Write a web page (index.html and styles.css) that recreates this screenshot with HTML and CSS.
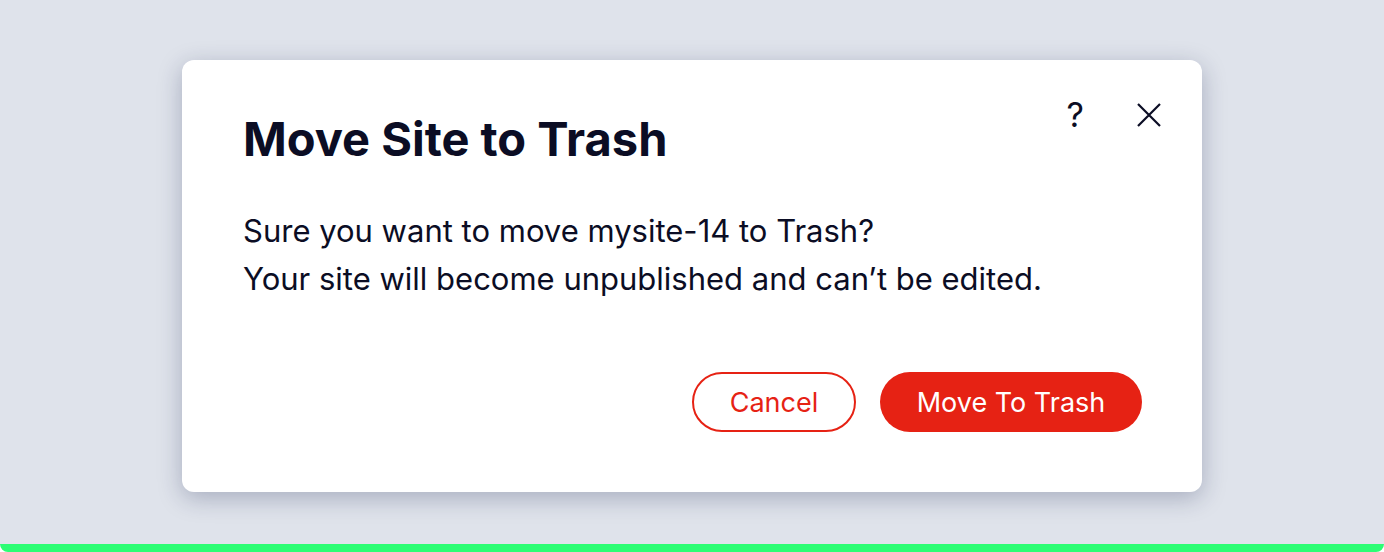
FILE: index.html
```html
<!DOCTYPE html>
<html>
<head>
<meta charset="utf-8">
<link rel="stylesheet" href="styles.css">
</head>
<body>
<div class="stage">
  <div class="dialog">
    <div class="header">
      <h1 class="title">Move Site to Trash</h1>
      <div class="actions">
        <span class="help">?</span>
        <svg class="close" width="26" height="26" viewBox="0 0 26 26"><path d="M2 2 L24 24 M24 2 L2 24" stroke="#0b0d24" stroke-width="2.2" fill="none"/></svg>
      </div>
    </div>
    <div class="body">
      <p>Sure you want to move mysite-14 to Trash?</p>
      <p>Your site will become unpublished and can’t be edited.</p>
    </div>
    <div class="footer">
      <button class="btn btn-secondary">Cancel</button>
      <button class="btn btn-primary">Move To Trash</button>
    </div>
  </div>
</div>
</body>
</html>
```

FILE: styles.css
```css
html, body { margin: 0; padding: 0; background: #ffffff; }
body { font-family: "Inter", "Noto Sans", sans-serif; color: #0b0d24; }
.stage {
  width: 1384px;
  height: 552px;
  box-sizing: border-box;
  background: #dfe3eb;
  border-bottom: 8px solid #2cfd74;
  border-radius: 0 0 8px 8px;
  display: flex;
  justify-content: center;
  padding-top: 60px;
}
.dialog {
  width: 1020px;
  height: 432px;
  box-sizing: border-box;
  background: #fff;
  border-radius: 12px;
  box-shadow: 0 6px 24px rgba(22, 33, 74, 0.28);
  padding: 40px 60px 60px 61px;
  display: flex;
  flex-direction: column;
}
.header { display: flex; justify-content: space-between; align-items: flex-start; }
.title { margin: 9px 0 0; font-size: 47px; font-weight: 700; letter-spacing: 0; line-height: 60px; }
.actions { display: flex; align-items: center; gap: 52px; margin-top: 2px; margin-right: -20px; }
.help { font-size: 34px; line-height: 26px; font-weight: 400; }
.body { margin-top: 38px; font-size: 31px; line-height: 48px; }
.body p { margin: 0; }
.footer { margin-top: auto; display: flex; justify-content: flex-end; gap: 24px; }
.btn {
  height: 60px;
  border-radius: 30px;
  font-family: inherit;
  font-size: 27px;
  padding: 0;
  cursor: pointer;
}
.btn-secondary { background: #fff; color: #e62214; border: 2px solid #e62214; width: 164px; }
.btn-primary { background: #e62214; color: #fff; border: none; width: 262px; }
```
